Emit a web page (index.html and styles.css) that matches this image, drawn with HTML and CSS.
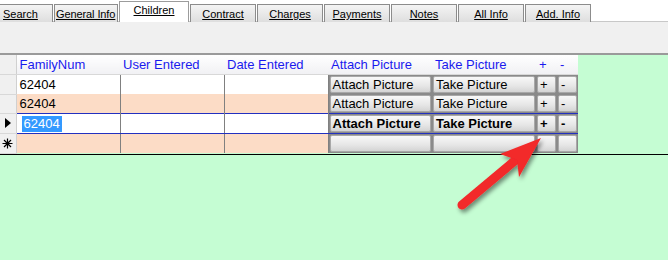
FILE: index.html
```html
<!DOCTYPE html>
<html lang="en">
<head>
    <meta charset="UTF-8">
    <title>Children</title>
    <link rel="stylesheet" href="styles.css">
</head>
<body>
    <div class="tabs">
        <span class="tab tab-search">Search</span>
        <span class="tab tab-general">General Info</span>
        <span class="tab active">Children</span>
        <span class="tab">Contract</span>
        <span class="tab">Charges</span>
        <span class="tab">Payments</span>
        <span class="tab">Notes</span>
        <span class="tab">All Info</span>
        <span class="tab">Add. Info</span>
    </div>
    <div class="panel"></div>

    <div class="grid-area">
        <div class="grid-wrap">
            <table class="grid">
                <colgroup>
                    <col class="c-sel"><col class="c-wide"><col class="c-wide"><col class="c-wide">
                    <col class="c-wide"><col class="c-wide"><col class="c-small"><col class="c-small">
                </colgroup>
                <tr class="head">
                    <th class="sel"></th>
                    <th>FamilyNum</th>
                    <th>User Entered</th>
                    <th>Date Entered</th>
                    <th>Attach Picture</th>
                    <th>Take Picture</th>
                    <th>+</th>
                    <th>-</th>
                </tr>
                <tr>
                    <td class="sel"></td>
                    <td class="txt">62404</td>
                    <td class="txt"></td>
                    <td class="txt"></td>
                    <td class="btn-cell"><span class="btn">Attach Picture</span></td>
                    <td class="btn-cell"><span class="btn">Take Picture</span></td>
                    <td class="btn-cell"><span class="btn">+</span></td>
                    <td class="btn-cell"><span class="btn">-</span></td>
                </tr>
                <tr class="alt">
                    <td class="sel"></td>
                    <td class="txt">62404</td>
                    <td class="txt"></td>
                    <td class="txt"></td>
                    <td class="btn-cell"><span class="btn">Attach Picture</span></td>
                    <td class="btn-cell"><span class="btn">Take Picture</span></td>
                    <td class="btn-cell"><span class="btn">+</span></td>
                    <td class="btn-cell"><span class="btn">-</span></td>
                </tr>
                <tr class="current">
                    <td class="sel"><span class="pointer"></span></td>
                    <td class="txt"><span class="selected-text">62404</span></td>
                    <td class="txt"></td>
                    <td class="txt"></td>
                    <td class="btn-cell"><span class="btn">Attach Picture</span></td>
                    <td class="btn-cell"><span class="btn">Take Picture</span></td>
                    <td class="btn-cell"><span class="btn">+</span></td>
                    <td class="btn-cell"><span class="btn">-</span></td>
                </tr>
                <tr class="alt">
                    <td class="sel">
                        <svg class="star" width="11" height="11" viewBox="0 0 11 11">
                            <path d="M5.5 0.5v10M0.5 5.5h10M2 2l7 7M9 2l-7 7" stroke="#000" stroke-width="1.2"/>
                        </svg>
                    </td>
                    <td class="txt"></td>
                    <td class="txt"></td>
                    <td class="txt"></td>
                    <td class="btn-cell"><span class="btn"></span></td>
                    <td class="btn-cell"><span class="btn"></span></td>
                    <td class="btn-cell"><span class="btn"></span></td>
                    <td class="btn-cell"><span class="btn"></span></td>
                </tr>
            </table>
        </div>
    </div>

    <!-- annotation arrow drawn over the grid -->
    <svg class="arrow" width="668" height="260" viewBox="0 0 668 260">
        <defs>
            <filter id="shadow" x="-20%" y="-20%" width="140%" height="140%">
                <feDropShadow dx="2" dy="3" stdDeviation="2" flood-color="#000" flood-opacity="0.45"/>
            </filter>
        </defs>
        <g filter="url(#shadow)" fill="#f2292a">
            <line x1="462" y1="205" x2="518" y2="158" stroke="#f2292a" stroke-width="9" stroke-linecap="round"/>
            <polygon points="541,138 519,177 517,160 500,154"/>
        </g>
    </svg>
</body>
</html>
```

FILE: styles.css
```css
body {
    margin: 0;
    background: #ffffff;
    font-family: "Liberation Sans", Arial, sans-serif;
    width: 668px;
    height: 260px;
    overflow: hidden;
    position: relative;
}

.tabs {
    display: flex;
    align-items: flex-end;
    height: 22px;
}

.tab {
    box-sizing: border-box;
    height: 18px;
    width: 66px;
    border: 1px solid #8c8c8c;
    border-bottom: none;
    margin-right: 1px;
    background: linear-gradient(#f4f4f4, #dedede);
    font-size: 11px;
    color: #000;
    text-decoration: underline;
    text-align: center;
    line-height: 18px;
    white-space: nowrap;
    overflow: hidden;
}

.tab-search {
    width: 53px;
    text-align: left;
    padding-left: 3px;
    border-left: none;
}

.tab-general {
    width: 64px;
    padding-left: 1px;
    text-align: left;
    letter-spacing: -0.1px;
}

.tab.active {
    height: 21px;
    width: 70px;
    background: #ffffff;
    line-height: 16px;
    border-color: #9c9c9c;
}

.panel {
    height: 31px;
    background: #f0f0f0;
    border-top: 1px solid #c8c8c8;
    border-bottom: 2px solid #9a9a9a;
    margin-top: -1px;
}

.grid-area {
    background: #c5fdd3;
    height: 205px;
}

.grid-wrap {
    border-bottom: 1px solid #000;
}

.grid {
    border-collapse: collapse;
    table-layout: fixed;
    width: 578px;
    font-size: 13px;
}

.c-sel { width: 16px; }
.c-wide { width: 104px; }
.c-small { width: 21px; }

.grid th,
.grid td {
    padding: 0;
    overflow: hidden;
    white-space: nowrap;
}

.head th {
    height: 19px;
    background: linear-gradient(#ffffff, #f1f1f4);
    color: #1a1aee;
    font-weight: normal;
    text-align: left;
    padding-left: 3px;
    border-bottom: 1px solid #d8d8d8;
}

.head th.sel {
    background: #f0f0f0;
    border-right: 1px solid #d0d0d0;
}

.grid tr {
    height: 19px;
    background: #ffffff;
}

.grid tr.alt {
    background: #fcdcc6;
}

.grid td.sel {
    background: #f0f0f0;
    border-right: 1px solid #d0d0d0;
    border-bottom: 1px solid #d8d8d8;
    position: relative;
}

.grid td.txt {
    padding-left: 3px;
    border-right: 1px solid #808080;
    height: 19px;
}

.grid tr.current {
    height: 18px;
}

.grid tr.current td {
    border-top: 1px solid #2230c0;
    border-bottom: 1px solid #2230c0;
}

.grid tr.current td.txt {
    height: 18px;
}

.grid tr.current td.sel {
    border-top: 1px solid #d8d8d8;
    border-bottom: 1px solid #d8d8d8;
}

.pointer {
    position: absolute;
    left: 5px;
    top: 4px;
    border-top: 5px solid transparent;
    border-bottom: 5px solid transparent;
    border-left: 6px solid #000;
}

.star {
    display: block;
    margin: 0 auto;
}

.selected-text {
    background: #3399ff;
    color: #ffffff;
    padding: 0 2px 1px 2px;
    margin-left: 2px;
}

.grid td.btn-cell {
    background: #8a8a8a;
    padding: 1px;
    height: 17px;
}

.btn {
    display: block;
    box-sizing: border-box;
    height: 17px;
    border: 1px solid #a8a8a8;
    border-radius: 2px;
    background: linear-gradient(#f8f8f8, #e6e6e6 60%, #d4d4d4);
    color: #000;
    font-size: 13px;
    line-height: 15px;
    padding-left: 2px;
    overflow: hidden;
}

.current .btn {
    font-weight: bold;
}

.arrow {
    position: absolute;
    left: 0;
    top: 0;
    pointer-events: none;
}
```
